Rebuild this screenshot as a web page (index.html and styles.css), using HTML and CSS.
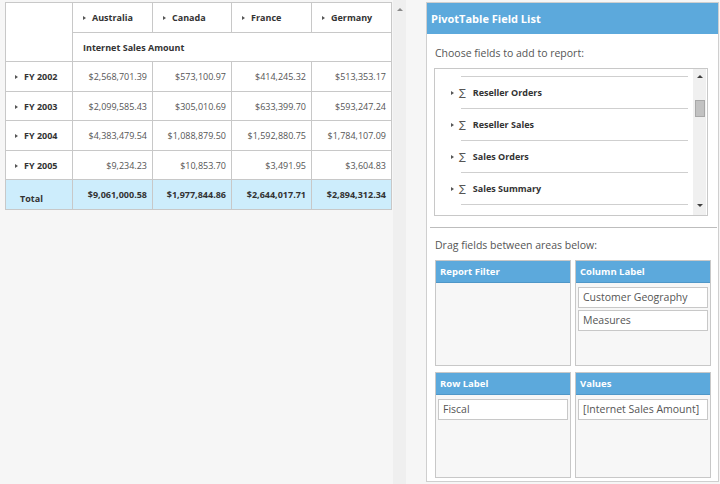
FILE: index.html
```html
<!DOCTYPE html>
<html>
<head>
<meta charset="utf-8">
<link rel="stylesheet" href="styles.css">
</head>
<body>
<div class="app">
  <div class="grid-wrap">
    <div class="grid-area">
      <table class="pivot">
        <colgroup>
          <col class="c-row"><col class="c-val"><col class="c-val79"><col class="c-val"><col class="c-val">
        </colgroup>
        <tr class="r30">
          <th class="corner" rowspan="2"></th>
          <th class="colhead"><span class="arrow"></span>Australia</th>
          <th class="colhead"><span class="arrow"></span>Canada</th>
          <th class="colhead"><span class="arrow"></span>France</th>
          <th class="colhead"><span class="arrow"></span>Germany</th>
        </tr>
        <tr class="r29">
          <th class="measure" colspan="4">Internet Sales Amount</th>
        </tr>
        <tr class="r30">
          <th class="rowhead"><span class="arrow"></span>FY 2002</th>
          <td>$2,568,701.39</td><td>$573,100.97</td><td>$414,245.32</td><td>$513,353.17</td>
        </tr>
        <tr class="r29">
          <th class="rowhead"><span class="arrow"></span>FY 2003</th>
          <td>$2,099,585.43</td><td>$305,010.69</td><td>$633,399.70</td><td>$593,247.24</td>
        </tr>
        <tr class="r30">
          <th class="rowhead"><span class="arrow"></span>FY 2004</th>
          <td>$4,383,479.54</td><td>$1,088,879.50</td><td>$1,592,880.75</td><td>$1,784,107.09</td>
        </tr>
        <tr class="r29">
          <th class="rowhead"><span class="arrow"></span>FY 2005</th>
          <td>$9,234.23</td><td>$10,853.70</td><td>$3,491.95</td><td>$3,604.83</td>
        </tr>
        <tr class="r30 total">
          <th class="totalhead">Total</th>
          <td>$9,061,000.58</td><td>$1,977,844.86</td><td>$2,644,017.71</td><td>$2,894,312.34</td>
        </tr>
      </table>
    </div>
    <div class="vscroll"><span class="up"></span></div>
  </div>

  <div class="panel">
    <div class="panel-head">PivotTable Field List</div>
    <div class="panel-text">Choose fields to add to report:</div>
    <div class="tree">
      <div class="tree-list">
        <div class="tsep"></div>
        <div class="titem"><span class="arrow"></span><span class="sigma">∑</span>Reseller Orders</div>
        <div class="tsep"></div>
        <div class="titem"><span class="arrow"></span><span class="sigma">∑</span>Reseller Sales</div>
        <div class="tsep"></div>
        <div class="titem"><span class="arrow"></span><span class="sigma">∑</span>Sales Orders</div>
        <div class="tsep"></div>
        <div class="titem"><span class="arrow"></span><span class="sigma">∑</span>Sales Summary</div>
        <div class="tsep"></div>
      </div>
      <div class="tscroll">
        <span class="up"></span>
        <div class="thumb"></div>
        <span class="down"></span>
      </div>
    </div>
    <div class="divider"></div>
    <div class="panel-text drag">Drag fields between areas below:</div>
    <div class="areas">
      <div class="area">
        <div class="area-head">Report Filter</div>
        <div class="area-body"></div>
      </div>
      <div class="area">
        <div class="area-head">Column Label</div>
        <div class="area-body">
          <div class="chip">Customer Geography</div>
          <div class="chip">Measures</div>
        </div>
      </div>
      <div class="area">
        <div class="area-head">Row Label</div>
        <div class="area-body">
          <div class="chip">Fiscal</div>
        </div>
      </div>
      <div class="area">
        <div class="area-head">Values</div>
        <div class="area-body">
          <div class="chip">[Internet Sales Amount]</div>
        </div>
      </div>
    </div>
  </div>
</div>
</body>
</html>
```

FILE: styles.css
```css
* { box-sizing: border-box; }
html, body { margin: 0; padding: 0; }
body {
  background: #f6f6f6;
  font-family: "Open Sans", "Noto Sans", sans-serif;
  color: #333;
  width: 720px;
  height: 484px;
  overflow: hidden;
}
.app {
  display: flex;
  padding: 2px 0 0 5px;
  height: 484px;
}
.grid-wrap {
  display: flex;
  width: 401px;
  height: 482px;
}
.grid-area {
  width: 388px;
}
.vscroll {
  width: 13px;
  background: #efefef;
  position: relative;
  margin-top: -2px;
  height: 484px;
}
.up, .down {
  position: absolute;
  left: 4px;
  width: 0; height: 0;
  border-left: 3px solid transparent;
  border-right: 3px solid transparent;
}
.up { top: 8px; border-bottom: 3px solid #8a8a8a; }
.down { bottom: 8px; border-top: 3px solid #505050; }

.pivot {
  border-collapse: collapse;
  table-layout: fixed;
  width: 386px;
  background: #fff;
  font-size: 9px;
}
.c-row { width: 67px; }
.c-val { width: 80px; }
.c-val79 { width: 79px; }
.pivot th, .pivot td {
  border: 1px solid #c8c8c8;
  padding: 0;
  white-space: nowrap;
  overflow: hidden;
}
.r30 { height: 30px; }
.r29 { height: 29px; }
.pivot th {
  text-align: left;
  font-weight: 700;
  color: #333;
}
.colhead { padding-left: 10px !important; }
.measure { padding-left: 10px !important; }
.rowhead { padding-left: 9px !important; }
.pivot td {
  text-align: right;
  padding-right: 5px;
  color: #555;
}
.total th, .total td { background: #cdedfc; }
.total td { font-weight: 700; color: #333; }
.totalhead {
  padding: 8px 0 0 14px !important;
  vertical-align: middle;
}
.arrow {
  display: inline-block;
  width: 0; height: 0;
  border-top: 2.5px solid transparent;
  border-bottom: 2.5px solid transparent;
  border-left: 3.5px solid #555;
  margin-right: 6px;
  vertical-align: 1px;
}

.panel {
  margin-left: 20px;
  width: 293px;
  height: 480px;
  background: #fff;
  border: 1px solid #cfcfcf;
  display: flex;
  flex-direction: column;
}
.panel-head {
  background: #5ca9dc;
  color: #fff;
  font-weight: 700;
  font-size: 11px;
  height: 31px;
  line-height: 31px;
  padding-left: 4px;
}
.panel-text {
  font-size: 10.5px;
  color: #555;
  line-height: 16px;
  padding: 11px 0 0 8px;
}
.tree {
  margin: 7px 10px 0 7px;
  height: 148px;
  border: 1px solid #c8c8c8;
  display: flex;
}
.tree-list {
  flex: 1;
  padding: 7px 5px 0 0;
}
.tsep {
  height: 1px;
  background: #cfcfcf;
  margin-left: 26px;
}
.titem {
  height: 31px;
  display: flex;
  align-items: center;
  padding-left: 16px;
  font-size: 9px;
  font-weight: 700;
  color: #333;
}
.titem .arrow { margin-right: 5px; }
.sigma {
  font-family: "DejaVu Sans", sans-serif;
  font-weight: 400;
  font-size: 10px;
  color: #555;
  margin-right: 7px;
}
.tscroll {
  width: 13px;
  margin-right: 1px;
  background: #f0f0f0;
  position: relative;
}
.tscroll .up { left: 4px; top: 6px; border-bottom-color: #404040; }
.tscroll .down { left: 4px; bottom: 8px; border-top-color: #404040; }
.thumb {
  position: absolute;
  top: 31px;
  left: 2px;
  width: 10px;
  height: 17px;
  background: #c2c2c2;
  border: 1px solid #a8a8a8;
}
.divider {
  height: 1px;
  background: #bdbdbd;
  margin: 11px 1px 0 3px;
}
.drag { padding-top: 9px; }
.areas {
  display: grid;
  grid-template-columns: 136px 136px;
  grid-template-rows: 106px 106px;
  column-gap: 4px;
  row-gap: 6px;
  margin: 7px 0 0 8px;
}
.area {
  border: 1px solid #c8c8c8;
  background: #f7f7f7;
  display: flex;
  flex-direction: column;
}
.area-head {
  background: #5ca9dc;
  color: #fff;
  font-weight: 700;
  font-size: 9.5px;
  height: 22px;
  line-height: 22px;
  padding-left: 4px;
  border-bottom: 1px solid #4f97c8;
}
.area-body {
  padding: 4px 2px 0 2px;
  display: flex;
  flex-direction: column;
  gap: 2px;
}
.chip {
  height: 21px;
  line-height: 19px;
  background: #fff;
  border: 1px solid #c8c8c8;
  font-size: 10.5px;
  color: #555;
  padding-left: 4px;
}
```
